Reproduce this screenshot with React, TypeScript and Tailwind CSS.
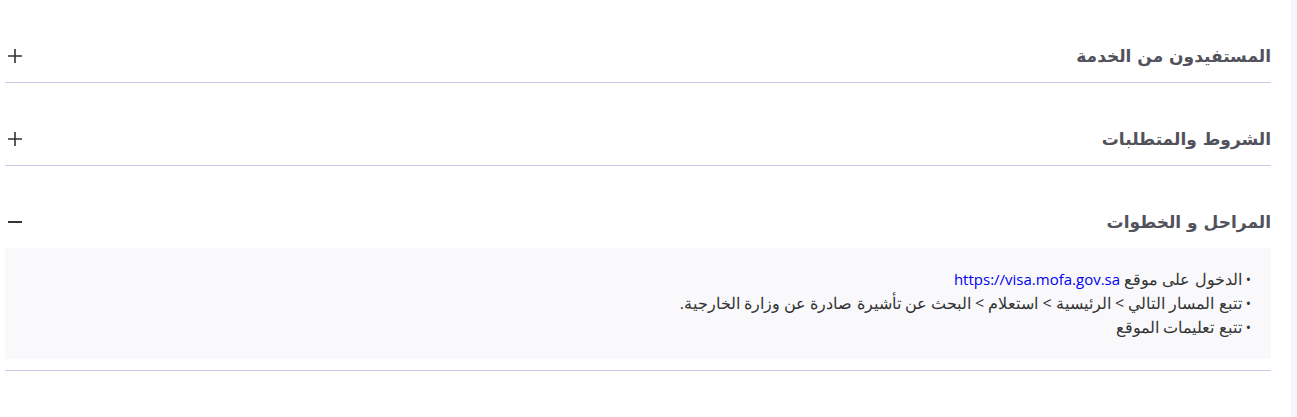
const Plus = () => (
  <svg width="14" height="14" viewBox="0 0 14 14" className="text-[#333]">
    <path d="M7 0v14M0 7h14" stroke="currentColor" strokeWidth="1.6" />
  </svg>
);

const Minus = () => (
  <svg width="14" height="14" viewBox="0 0 14 14" className="text-[#333]">
    <path d="M0 7h14" stroke="currentColor" strokeWidth="2" />
  </svg>
);

const AccordionItem = ({ title, open, children }: { title: string; open?: boolean; children?: React.ReactNode }) => (
  <div className="border-b border-[#cbc8e6]">
    <div className="flex items-center justify-between pt-[44px] pb-[14px]">
      <h3 className="font-['DejaVu_Sans',sans-serif] text-[17px] leading-[24px] font-bold text-[#52525c]">{title}</h3>
      <span className="ml-[3px]">{open ? <Minus /> : <Plus />}</span>
    </div>
    {open && <div className="mb-[11px]">{children}</div>}
  </div>
);

export default function App() {
  return (
    <div dir="rtl" className="flex h-[417px] bg-white font-['Open_Sans',sans-serif]">
      <div className="w-[6px] bg-[#f5f6fb]" />
      <div className="w-[1291px] pr-[20px] pl-[5px]">
        <AccordionItem title="المستفيدون من الخدمة" />
        <AccordionItem title="الشروط والمتطلبات" />
        <AccordionItem title="المراحل و الخطوات" open>
          <ul className="bg-[#f9f9fb] pt-[19px] pb-[20px] pr-[20px] text-[16px] leading-[24px] text-[#333]">
            <li className="h-[24px]">
              <span className="text-[14px]">•</span> الدخول على موقع{" "}
              <a className="text-[15px] text-[#0000ee]" href="#">https://visa.mofa.gov.sa</a>
            </li>
            <li className="h-[24px]">
              <span className="text-[14px]">•</span> تتبع المسار التالي &gt; الرئيسية &gt; استعلام &gt; البحث عن تأشيرة صادرة عن وزارة الخارجية.
            </li>
            <li className="h-[24px]">
              <span className="text-[14px]">•</span> تتبع تعليمات الموقع
            </li>
          </ul>
        </AccordionItem>
      </div>
    </div>
  );
}
